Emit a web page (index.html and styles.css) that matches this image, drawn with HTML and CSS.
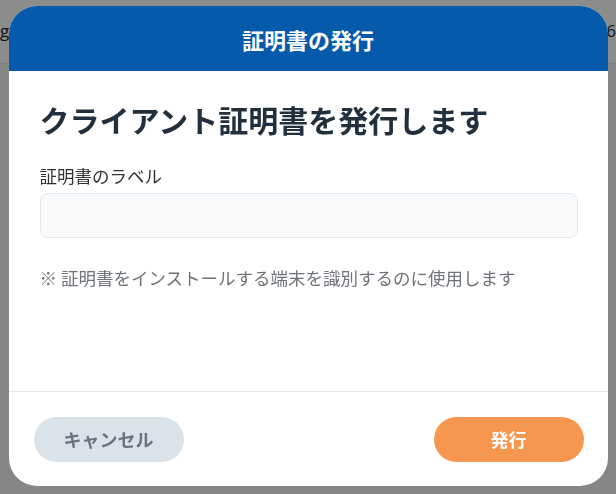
FILE: index.html
```html
<!DOCTYPE html>
<html lang="ja">
<head>
    <meta charset="UTF-8">
    <meta name="viewport" content="width=device-width, initial-scale=1.0">
    <title>証明書の発行</title>
    <link rel="stylesheet" href="styles.css">
</head>
<body>
    <div class="page">
        <div class="topbar">
            <span>gn</span>
            <span>6</span>
        </div>
    </div>

    <div class="backdrop">
        <div class="modal">
            <div class="modal-header">証明書の発行</div>
            <div class="modal-body">
                <h1>クライアント証明書を発行します</h1>
                <label for="cert-label">証明書のラベル</label>
                <input type="text" id="cert-label">
                <p class="note">※ 証明書をインストールする端末を識別するのに使用します</p>
            </div>
            <div class="modal-footer">
                <button type="button" class="btn btn-cancel">キャンセル</button>
                <button type="button" class="btn btn-issue">発行</button>
            </div>
        </div>
    </div>
</body>
</html>
```

FILE: styles.css
```css
/* Client certificate issue dialog */
body {
    margin: 0;
    font-family: "Noto Sans CJK JP", "Noto Sans", sans-serif;
    background-color: #f5f5f5;
    color: #333;
}

.page {
    height: 494px;
}

.topbar {
    height: 61px;
    background-color: #fff;
    border-bottom: 1px solid #e6e6e6;
    display: flex;
    justify-content: space-between;
    align-items: center;
    font-family: "Open Sans", sans-serif;
    font-size: 17px;
    color: #222;
    padding-bottom: 2px;
}

.backdrop {
    position: fixed;
    inset: 0;
    background-color: rgba(0, 0, 0, 0.45);
    display: flex;
    justify-content: center;
    padding-top: 6px;
}

.modal {
    width: 599px;
    height: 480px;
    background-color: #fff;
    border-radius: 28px;
    overflow: hidden;
    display: flex;
    flex-direction: column;
}

.modal-header {
    height: 65px;
    background-color: #055aab;
    color: #fff;
    font-size: 22px;
    font-weight: bold;
    display: flex;
    align-items: center;
    justify-content: center;
}

.modal-body {
    flex: 1;
    padding: 28px 30px 0 31px;
}

h1 {
    margin: 0;
    font-size: 30px;
    line-height: 40px;
    font-weight: bold;
    color: #22303d;
}

label {
    display: block;
    margin-top: 24px;
    margin-bottom: 4px;
    font-size: 17.5px;
    line-height: 26px;
    color: #333;
}

input[type="text"] {
    display: block;
    box-sizing: border-box;
    width: 100%;
    height: 45px;
    border: 1px solid #e2e7ec;
    border-radius: 8px;
    background-color: #f8fafc;
}

.note {
    margin: 27px 0 0;
    font-size: 17.5px;
    line-height: 26px;
    color: #6e747a;
}

.modal-footer {
    height: 95px;
    box-sizing: border-box;
    border-top: 1px solid #e3e6e9;
    padding: 0 24px 0 25px;
    display: flex;
    justify-content: space-between;
    align-items: center;
}

.btn {
    width: 150px;
    height: 45px;
    border: none;
    border-radius: 23px;
    font-family: inherit;
    font-size: 18px;
    font-weight: bold;
    cursor: pointer;
}

.btn-cancel {
    background-color: #dae3ea;
    color: #6a737d;
}

.btn-issue {
    background-color: #f7964f;
    color: #fff;
}
```
